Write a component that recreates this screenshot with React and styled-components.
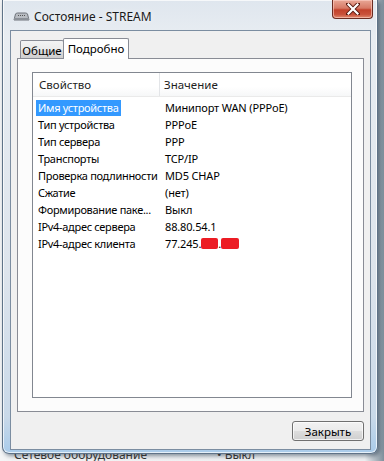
import React from "react";
import styled, { createGlobalStyle } from "styled-components";

const Global = createGlobalStyle`
  html, body { margin: 0; padding: 0; }
  body {
    background: #e9edf1;
    font-family: "Noto Sans", "Open Sans", sans-serif;
    font-size: 11px;
    color: #000;
  }
`;

const Page = styled.div`
  width: 384px;
  height: 461px;
  overflow: hidden;
  display: flex;
  flex-direction: column;
  background: linear-gradient(90deg, #f4f5f6 0%, #eef0f2 95%, #7f8f9c 100%);
`;

const Window = styled.div`
  margin-left: 2px;
  width: 376px;
  height: 454px;
  box-sizing: border-box;
  flex: none;
  display: flex;
  flex-direction: column;
  border: 1px solid #5f7388;
  border-top: none;
  border-radius: 0 0 7px 7px;
  background: linear-gradient(180deg, #dfe6ee 0%, #e8edf2 8%, #dde4ec 60%, #c9d9e9 92%, #a9cbea 100%);
  box-shadow: inset 0 0 0 1px rgba(255,255,255,0.7), 2px 2px 4px rgba(40,60,80,0.55);
  padding: 0 6px 3px 7px;
`;

const TitleBar = styled.div`
  height: 30px;
  flex: none;
  display: flex;
  align-items: flex-start;
`;

const TitleLeft = styled.div`
  display: flex;
  align-items: center;
  gap: 4px;
  padding: 8px 0 0 3px;
`;

const TitleText = styled.span`
  font-size: 12px;
  color: #1a1a1a;
  text-shadow: 0 0 6px rgba(255,255,255,0.9);
`;

const CloseButton = styled.div`
  margin-left: auto;
  margin-right: -2px;
  width: 41px;
  height: 19px;
  box-sizing: border-box;
  border: 1px solid #6b2c22;
  border-top: none;
  border-radius: 0 0 4px 4px;
  background: linear-gradient(180deg, #e8a796 0%, #d77a66 45%, #c2412b 55%, #c9513a 80%, #e08a6f 100%);
  box-shadow: inset 0 0 0 1px rgba(255,210,200,0.6);
  display: flex;
  align-items: center;
  justify-content: center;
`;

const Client = styled.div`
  flex: none;
  height: 420px;
  box-sizing: border-box;
  border: 1px solid #7b8da1;
  background: #f0f0f0;
  display: flex;
  flex-direction: column;
  padding: 7px 6px 8px 6px;
`;

const TabStrip = styled.div`
  display: flex;
  align-items: flex-end;
  height: 21px;
  margin-bottom: -1px;
  padding-left: 3px;
  position: relative;
  z-index: 1;
`;

const Tab = styled.div`
  box-sizing: border-box;
  height: ${(p) => (p.$active ? "21px" : "18px")};
  width: ${(p) => (p.$active ? "66px" : "44px")};
  margin-bottom: ${(p) => (p.$active ? "0" : "1px")};
  margin-left: ${(p) => (p.$active ? "-1px" : "0")};
  border: 1px solid #898c95;
  border-bottom: none;
  border-radius: 2px 2px 0 0;
  background: ${(p) =>
    p.$active ? "#ffffff" : "linear-gradient(180deg, #f3f3f3 0%, #ebebeb 50%, #dddddd 51%, #cfcfcf 100%)"};
  display: flex;
  justify-content: center;
  align-items: ${(p) => (p.$active ? "flex-start" : "center")};
  padding-top: ${(p) => (p.$active ? "2px" : "1px")};
  font-size: 11.5px;
  color: #000;
`;

const Panel = styled.div`
  height: 354px;
  box-sizing: border-box;
  border: 1px solid #898c95;
  background: #fcfcfc;
  padding: 13px 11px 13px 14px;
  display: flex;
`;

const List = styled.div`
  flex: 1;
  box-sizing: border-box;
  border: 1px solid #828790;
  background: #fff;
  display: flex;
  flex-direction: column;
`;

const HeaderRow = styled.div`
  display: grid;
  grid-template-columns: 127px 1fr;
  height: 23px;
  border-bottom: 1px solid #eaeaea;
  background: linear-gradient(180deg, #ffffff 0%, #ffffff 60%, #f6f7f8 100%);
`;

const HeaderCell = styled.div`
  display: flex;
  align-items: center;
  padding-left: ${(p) => (p.$first ? "6px" : "4px")};
  border-right: ${(p) => (p.$first ? "1px solid #e3e5e8" : "none")};
  color: #1e1e1e;
  font-size: 11.5px;
`;

const Rows = styled.div`
  padding-top: 2px;
  display: flex;
  flex-direction: column;
`;

const Row = styled.div`
  display: grid;
  grid-template-columns: 127px 1fr;
  height: 17px;
  align-items: center;
`;

const Cell = styled.div`
  padding-left: ${(p) => (p.$first ? "3px" : "5px")};
  white-space: nowrap;
  overflow: hidden;
  font-size: 11px;
  letter-spacing: ${(p) => (p.$first ? "-0.3px" : "-0.15px")};
  line-height: 16px;
  color: #000;
`;

const Label = styled.span`
  display: inline-block;
  padding: 0 2px;
  background: ${(p) => (p.$selected ? "#3399ff" : "transparent")};
  color: ${(p) => (p.$selected ? "#ffffff" : "#000")};
`;

const Redact = styled.span`
  display: inline-block;
  width: ${(p) => p.$w}px;
  height: 11px;
  background: #ec1c24;
  border-radius: 2px;
  vertical-align: -1px;
`;

const Footer = styled.div`
  display: flex;
  justify-content: flex-end;
  margin-top: 9px;
`;

const Button = styled.div`
  width: 72px;
  height: 20px;
  box-sizing: border-box;
  border: 1px solid #707070;
  border-radius: 3px;
  background: linear-gradient(180deg, #f2f2f2 0%, #ebebeb 48%, #dddddd 52%, #cfcfcf 100%);
  box-shadow: inset 0 0 0 1px rgba(255,255,255,0.7);
  display: flex;
  align-items: center;
  justify-content: center;
  font-size: 11.5px;
  color: #000;
`;

const Backdrop = styled.div`
  height: 7px;
  overflow: hidden;
  display: flex;
  padding-left: 14px;
  gap: 70px;
  font-size: 12px;
  line-height: 12px;
  color: #333;
`;

const BackText = styled.span`
  margin-top: -5px;
`;

const ModemIcon = () => (
  <svg width="17" height="9" viewBox="0 0 17 9">
    <path d="M1 8 L2.5 2 Q3 1 4.5 1 L12.5 1 Q14 1 14.5 2 L16 8 Z" fill="#b8bcc2" stroke="#6e737a" strokeWidth="1" />
    <rect x="1" y="6" width="15" height="2" fill="#8c9198" />
    <path d="M5 3.5 h7" stroke="#555" strokeWidth="1" strokeDasharray="1 1" />
  </svg>
);

const CloseX = () => (
  <svg width="14" height="12" viewBox="0 0 14 12">
    <path d="M2 1 L12 11 M12 1 L2 11" stroke="#5a1a10" strokeWidth="4" strokeLinecap="square" />
    <path d="M2.5 1.5 L11.5 10.5 M11.5 1.5 L2.5 10.5" stroke="#ffffff" strokeWidth="2.2" strokeLinecap="square" />
  </svg>
);

const rows = [
  ["Имя устройства", "Минипорт WAN (PPPoE)", true],
  ["Тип устройства", "PPPoE"],
  ["Тип сервера", "PPP"],
  ["Транспорты", "TCP/IP"],
  ["Проверка подлинности", "MD5 CHAP"],
  ["Сжатие", "(нет)"],
  ["Формирование паке...", "Выкл"],
  ["IPv4-адрес сервера", "88.80.54.1"],
  ["IPv4-адрес клиента", null],
];

export default function App() {
  return (
    <>
      <Global />
      <Page>
        <Window>
          <TitleBar>
            <TitleLeft>
              <ModemIcon />
              <TitleText>Состояние - STREAM</TitleText>
            </TitleLeft>
            <CloseButton>
              <CloseX />
            </CloseButton>
          </TitleBar>
          <Client>
            <TabStrip>
              <Tab>Общие</Tab>
              <Tab $active>Подробно</Tab>
            </TabStrip>
            <Panel>
              <List>
                <HeaderRow>
                  <HeaderCell $first>Свойство</HeaderCell>
                  <HeaderCell>Значение</HeaderCell>
                </HeaderRow>
                <Rows>
                  {rows.map(([k, v, sel]) => (
                    <Row key={k}>
                      <Cell $first>
                        <Label $selected={sel}>{k}</Label>
                      </Cell>
                      <Cell>
                        {v !== null ? (
                          v
                        ) : (
                          <>
                            77.245.<Redact $w={17} />.<Redact $w={18} />
                          </>
                        )}
                      </Cell>
                    </Row>
                  ))}
                </Rows>
              </List>
            </Panel>
            <Footer>
              <Button>Закрыть</Button>
            </Footer>
          </Client>
        </Window>
        <Backdrop>
          <BackText>Сетевое оборудование</BackText>
          <BackText>• Выкл</BackText>
        </Backdrop>
      </Page>
    </>
  );
}
